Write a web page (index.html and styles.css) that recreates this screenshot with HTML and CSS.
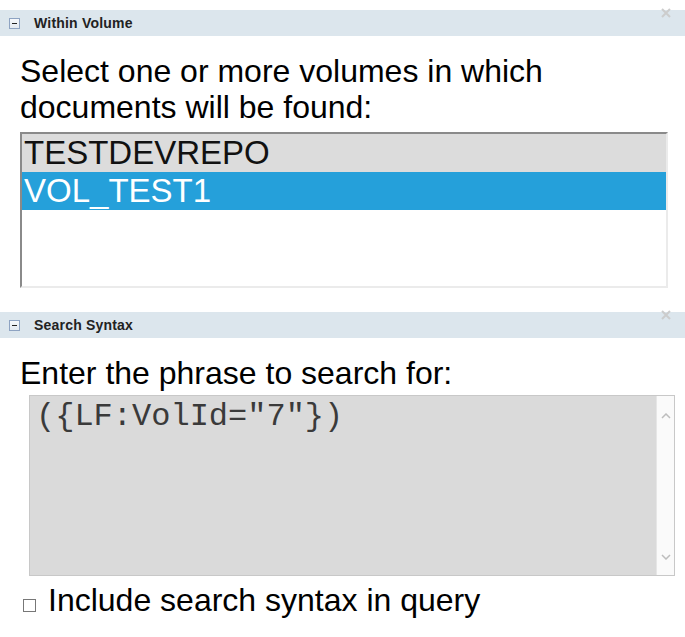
FILE: index.html
```html
<!DOCTYPE html>
<html>
<head>
<meta charset="utf-8">
<link rel="stylesheet" href="styles.css">
</head>
<body>
<div class="panel">
  <div class="panel-header">
    <span class="toggle"><span class="minus"></span></span>
    <span class="title">Within Volume</span>
    <svg class="close" width="10" height="10" viewBox="0 0 10 10"><path d="M1 1 L9 9 M9 1 L1 9" stroke="#cccccc" stroke-width="2" fill="none"/></svg>
  </div>
  <div class="panel-body volume-body">
    <p class="prompt">Select one or more volumes in which documents will be found:</p>
    <div class="listbox">
      <div class="option">TESTDEVREPO</div>
      <div class="option selected">VOL_TEST1</div>
    </div>
  </div>
</div>
<div class="panel second">
  <div class="panel-header">
    <span class="toggle"><span class="minus"></span></span>
    <span class="title">Search Syntax</span>
    <svg class="close" width="10" height="10" viewBox="0 0 10 10"><path d="M1 1 L9 9 M9 1 L1 9" stroke="#cccccc" stroke-width="2" fill="none"/></svg>
  </div>
  <div class="panel-body syntax-body">
    <p class="prompt">Enter the phrase to search for:</p>
    <div class="textbox">
      <div class="textbox-content">({LF:VolId="7"})</div>
      <div class="scrollbar">
        <svg width="10" height="6" viewBox="0 0 10 6"><path d="M1 5 L5 1 L9 5" stroke="#bdbdbd" stroke-width="1.5" fill="none"/></svg>
        <svg width="10" height="6" viewBox="0 0 10 6"><path d="M1 1 L5 5 L9 1" stroke="#bdbdbd" stroke-width="1.5" fill="none"/></svg>
      </div>
    </div>
    <label class="check-row"><span class="checkbox"></span><span class="check-label">Include search syntax in query</span></label>
  </div>
</div>
</body>
</html>
```
FILE: styles.css
```css
html, body {
  margin: 0;
  padding: 0;
  background: #ffffff;
}
body {
  width: 685px;
  font-family: "Liberation Sans", Arial, sans-serif;
  color: #000;
}
.panel {
  padding-top: 10px;
}
.panel.second {
  padding-top: 24px;
}
.panel-header {
  position: relative;
  height: 26px;
  background: #dce6ed;
  display: flex;
  align-items: center;
  padding-left: 9px;
}
.toggle {
  width: 9px;
  height: 9px;
  border: 1px solid #8ea3c2;
  background: linear-gradient(#f6f8fb, #e3e9f0);
  display: flex;
  align-items: center;
  justify-content: center;
}
.minus {
  width: 5px;
  height: 1px;
  background: #222;
}
.title {
  margin-left: 14px;
  font-weight: bold;
  font-size: 14px;
  letter-spacing: 0.2px;
  color: #222;
}
.close {
  position: absolute;
  right: 14px;
  top: -2px;
}
.panel-body {
  padding: 17px 17px 0 20px;
}
.syntax-body {
  padding-right: 10px;
}
.prompt {
  margin: 0;
  font-size: 32px;
  line-height: 36px;
}
.listbox {
  margin-top: 7px;
  height: 152px;
  border-style: solid;
  border-width: 2px;
  border-color: #8a8a8a #ebebeb #ebebeb #8a8a8a;
  background: #fff;
}
.option {
  height: 38px;
  line-height: 38px;
  font-size: 33px;
  padding-left: 2px;
  background: #dcdcdc;
  color: #111;
  white-space: nowrap;
}
.option.selected {
  background: #25a0da;
  color: #fff;
}
.textbox {
  margin: 4px 0 0 9px;
  height: 179px;
  border: 1px solid #c8c8c8;
  background: #dadada;
  display: flex;
}
.textbox-content {
  flex: 1;
  padding: 3px 0 0 6px;
  font-family: "Liberation Mono", "Courier New", monospace;
  font-size: 32px;
  line-height: 36px;
  color: #3a3a3a;
  white-space: pre;
}
.scrollbar {
  width: 17px;
  background: #fafafa;
  border-left: 1px solid #e6e6e6;
  display: flex;
  flex-direction: column;
  justify-content: space-between;
  align-items: center;
  padding: 17px 0 15px;
}
.check-row {
  margin: 6px 0 0 3px;
  display: flex;
  align-items: flex-end;
  height: 36px;
}
.checkbox {
  width: 11px;
  height: 11px;
  border: 1px solid #777;
  background: #fff;
  margin-bottom: 6px;
}
.check-label {
  margin-left: 12px;
  font-size: 32px;
  line-height: 36px;
}
```
